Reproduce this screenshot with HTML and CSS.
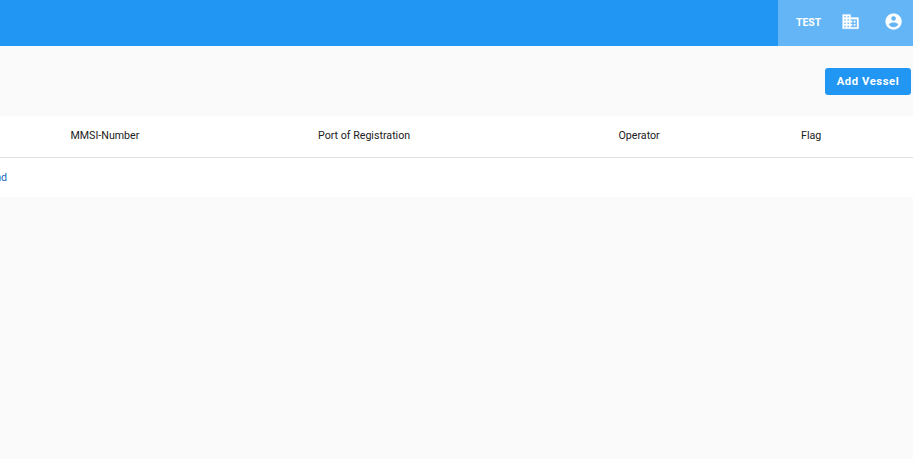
FILE: index.html
```html
<!DOCTYPE html>
<html lang="en">
<head>
<meta charset="utf-8">
<title>Vessels</title>
<link rel="stylesheet" href="styles.css">
</head>
<body>
<header class="topbar">
  <div class="account">
    <span class="company">TEST</span>
    <svg class="icon" viewBox="0 0 24 24"><path d="M12 7V3H2v18h20V7H12zM6 19H4v-2h2v2zm0-4H4v-2h2v2zm0-4H4V9h2v2zm0-4H4V5h2v2zm4 12H8v-2h2v2zm0-4H8v-2h2v2zm0-4H8V9h2v2zm0-4H8V5h2v2zm10 12h-8v-2h2v-2h-2v-2h2v-2h-2V9h8v10zm-2-8h-2v2h2v-2zm0 4h-2v2h2v-2z"/></svg>
    <svg class="icon" viewBox="0 0 24 24"><path d="M12 2C6.48 2 2 6.48 2 12s4.48 10 10 10 10-4.48 10-10S17.52 2 12 2zm0 3c1.66 0 3 1.34 3 3s-1.34 3-3 3-3-1.34-3-3 1.34-3 3-3zm0 14.2c-2.5 0-4.71-1.28-6-3.22.03-1.99 4-3.08 6-3.08 1.99 0 5.97 1.09 6 3.08-1.29 1.94-3.5 3.22-6 3.22z"/></svg>
  </div>
</header>
<main>
  <div class="actions">
    <button class="add" type="button">Add Vessel</button>
  </div>
  <section class="table">
    <div class="row head">
      <span>MMSI-Number</span>
      <span>Port of Registration</span>
      <span>Operator</span>
      <span>Flag</span>
    </div>
    <div class="row-empty"><a class="empty" href="#">No data found</a></div>
  </section>
</main>
</body>
</html>
```
FILE: styles.css
```css
* { box-sizing: border-box; }
html, body { margin: 0; height: 100%; overflow: hidden; }
body {
  background: #fafafa;
  font-family: Roboto, "Liberation Sans", sans-serif;
  color: #212121;
}
.topbar {
  height: 46px;
  background: #2196f3;
  display: flex;
  justify-content: flex-end;
}
.account {
  width: 135px;
  background: #64b5f6;
  display: flex;
  align-items: center;
  color: #fff;
  padding: 0 0 2px 18px;
}
.company { font-size: 10.4px; font-weight: 700; width: 45.4px; }
.icon { width: 19.2px; height: 19.2px; fill: #fff; stroke: #fff; stroke-width: 0.35; flex: none; }
.icon + .icon { margin-left: 23px; }
.actions {
  height: 70px;
  display: flex;
  justify-content: flex-end;
  align-items: flex-start;
  padding: 22px 2px 0 0;
}
.add {
  width: 86px;
  height: 27px;
  border: 0;
  border-radius: 3px;
  background: #2196f3;
  color: #fff;
  font: 700 11.2px Roboto, sans-serif;
  letter-spacing: 0.6px;
  padding: 0;
}
.table { background: #fff; }
.row {
  height: 42px;
  display: grid;
  grid-template-columns: 247.5px 300.5px 182.5px 1fr;
  align-items: center;
  padding: 0 0 2px 70.5px;
  font-size: 10.67px;
  border-bottom: 1px solid #e0e0e0;
}
.row-empty {
  height: 39px;
  display: flex;
  align-items: center;
  font-size: 10.67px;
}
.empty {
  color: #1565c0;
  text-decoration: none;
  margin-left: -60.5px;
  white-space: nowrap;
}
```
